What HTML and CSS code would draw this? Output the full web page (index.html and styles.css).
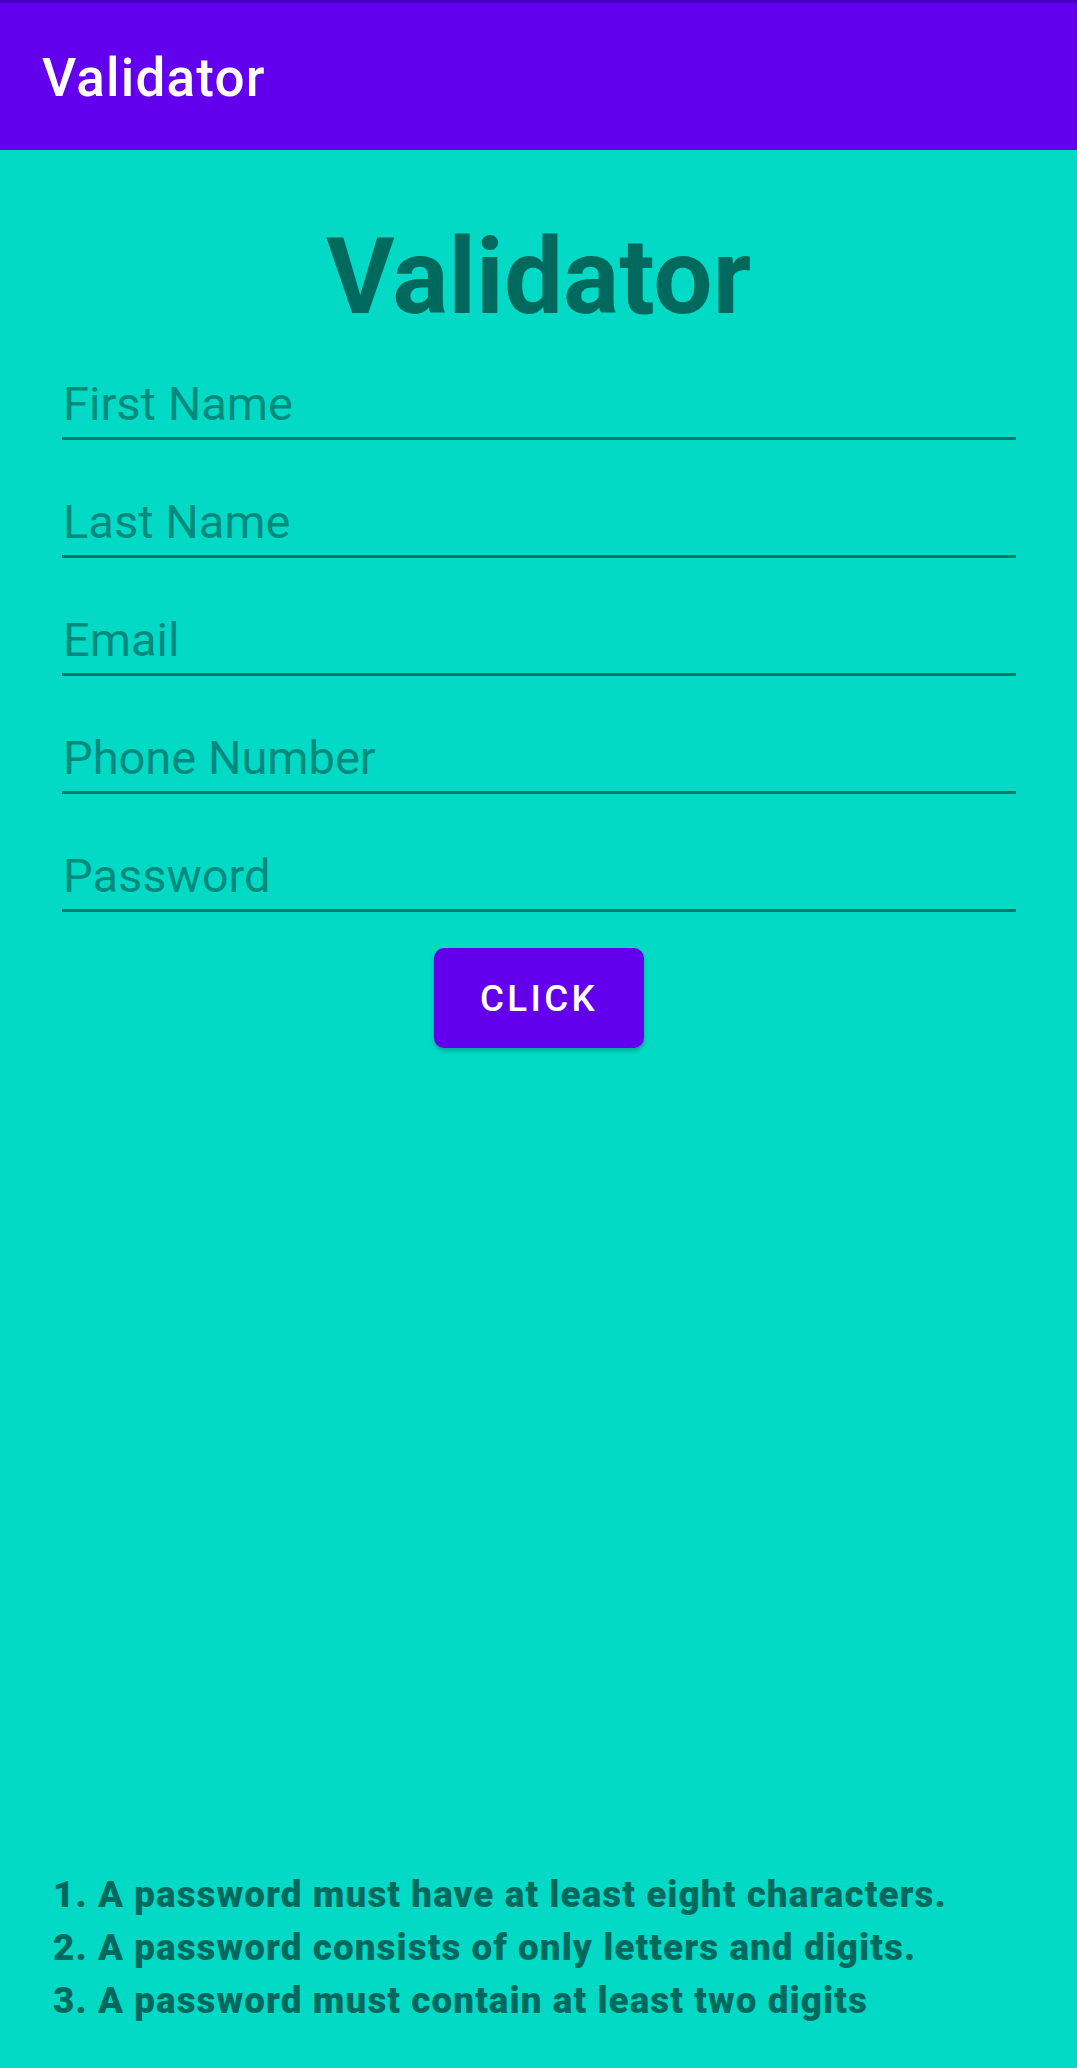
FILE: index.html
```html
<!DOCTYPE html>
<html lang="en">
<head>
<meta charset="utf-8">
<title>Validator</title>
<link rel="stylesheet" href="styles.css">
</head>
<body>
<div class="screen">
  <header class="appbar">
    <div class="statusline"></div>
    <div class="appbar-title">Validator</div>
  </header>
  <main class="content">
    <h1 class="heading">Validator</h1>
    <form class="form">
      <div class="field"><span class="hint">First Name</span></div>
      <div class="field"><span class="hint">Last Name</span></div>
      <div class="field"><span class="hint">Email</span></div>
      <div class="field"><span class="hint">Phone Number</span></div>
      <div class="field"><span class="hint">Password</span></div>
      <div class="actions"><button type="button" class="btn">CLICK</button></div>
    </form>
    <div class="rules">
      <p>1. A password must have at least eight characters.</p>
      <p>2. A password consists of only letters and digits.</p>
      <p>3. A password must contain at least two digits</p>
    </div>
  </main>
</div>
</body>
</html>
```
FILE: styles.css
```css
html, body {
  margin: 0;
  padding: 0;
}
body {
  font-family: Roboto, "Noto Sans", "Liberation Sans", sans-serif;
  background: #03dac5;
}
.screen {
  width: 1077px;
  height: 2068px;
  display: flex;
  flex-direction: column;
  background: #03dac5;
  overflow: hidden;
}
.appbar {
  height: 150px;
  background: #6200ee;
  box-sizing: border-box;
  flex-shrink: 0;
}
.statusline {
  height: 3px;
  background: #4500c4;
}
.appbar-title {
  padding: 45px 0 0 42px;
  font-size: 53px;
  line-height: 61.5px;
  font-weight: 500;
  color: #ffffff;
  letter-spacing: 1.2px;
}
.content {
  flex: 1;
  display: flex;
  flex-direction: column;
}
.heading {
  margin: 66px 0 0;
  text-align: center;
  font-size: 105px;
  line-height: 123px;
  font-weight: 700;
  color: #00695e;
}
.form {
  margin: 37px 61px 0 62px;
  display: flex;
  flex-direction: column;
  gap: 54px;
}
.field {
  font-size: 47px;
  line-height: 55px;
  padding: 0 0 6px 1px;
  border-bottom: 3px solid #00786d;
}
.hint {
  color: #008a7e;
}
.actions {
  display: flex;
  justify-content: center;
  margin-top: -18px;
}
.btn {
  width: 210px;
  height: 100px;
  border: none;
  border-radius: 10px;
  background: #6200ee;
  color: #ffffff;
  font-family: Roboto, "Noto Sans", sans-serif;
  font-size: 36.75px;
  font-weight: 500;
  letter-spacing: 3.3px;
  box-shadow: 0 3px 4px rgba(0, 0, 0, 0.22);
  padding: 0;
}
.rules {
  margin-top: auto;
  padding: 0 0 41px 53px;
}
.rules p {
  margin: 0;
  font-size: 36.75px;
  line-height: 53px;
  font-weight: 900;
  letter-spacing: 1.1px;
  color: #00695e;
}
```
